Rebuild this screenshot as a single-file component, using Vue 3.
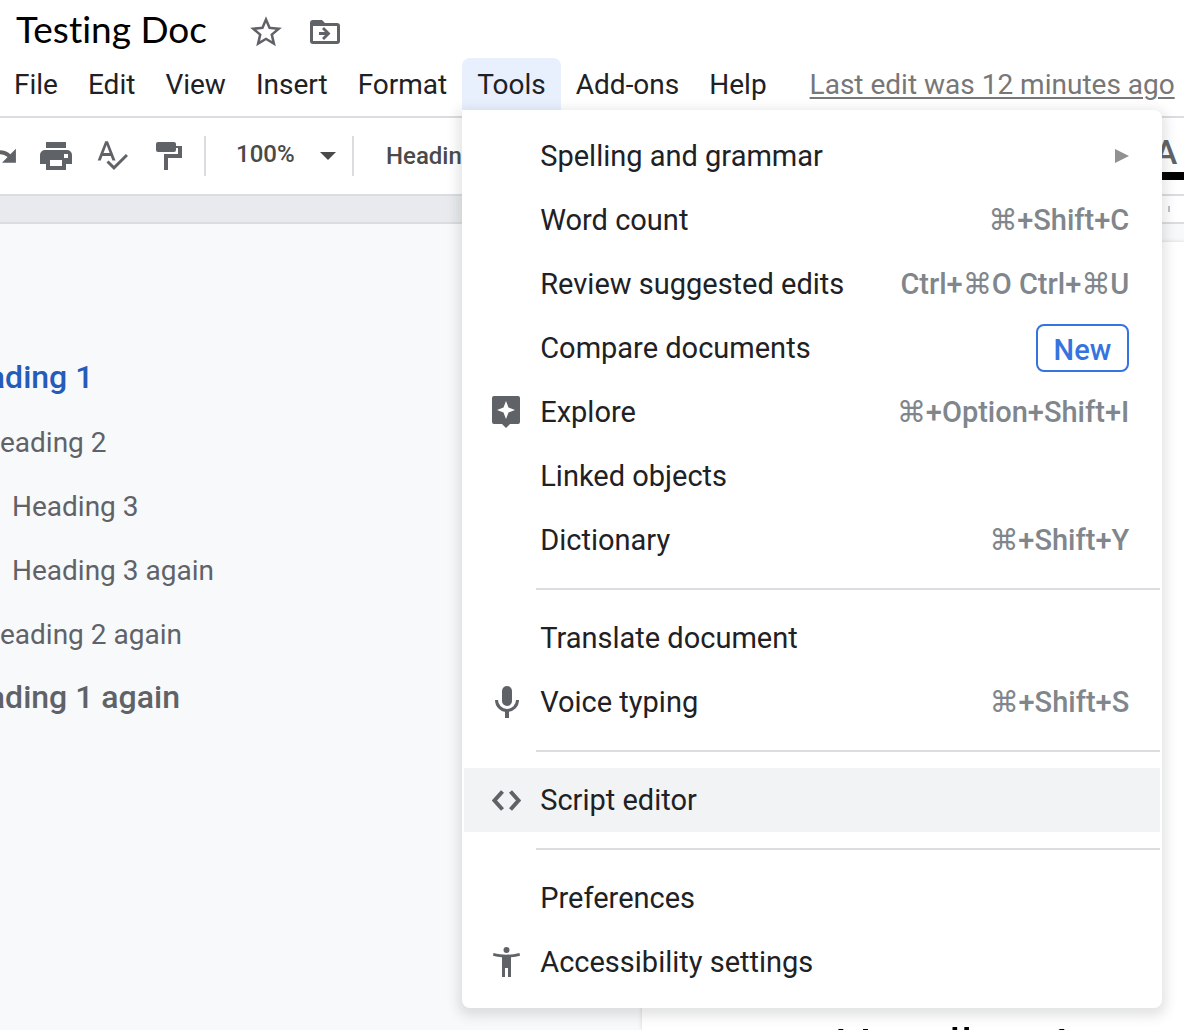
<script setup>
import { ref } from 'vue'

const title = ref('Testing Doc')
const zoom = ref('100%')
const paragraphStyle = ref('Heading 1')

const menusBefore = ['File', 'Edit', 'View', 'Insert', 'Format']
const menusAfter = ['Add-ons', 'Help']

const toolGroups = [
  [
    { label: 'Spelling and grammar', submenu: true },
    { label: 'Word count', keys: '⌘+Shift+C' },
    { label: 'Review suggested edits', keys: 'Ctrl+⌘O Ctrl+⌘U' },
    { label: 'Compare documents', badge: 'New' },
    { label: 'Explore', icon: 'explore', keys: '⌘+Option+Shift+I' },
    { label: 'Linked objects' },
    { label: 'Dictionary', keys: '⌘+Shift+Y' },
  ],
  [
    { label: 'Translate document' },
    { label: 'Voice typing', icon: 'mic', keys: '⌘+Shift+S' },
  ],
  [{ label: 'Script editor', icon: 'code', active: true }],
  [
    { label: 'Preferences' },
    { label: 'Accessibility settings', icon: 'accessibility' },
  ],
]

const outline = [
  { text: 'Heading 1', level: 1, current: true },
  { text: 'Heading 2', level: 2 },
  { text: 'Heading 3', level: 3 },
  { text: 'Heading 3 again', level: 3 },
  { text: 'Heading 2 again', level: 2 },
  { text: 'Heading 1 again', level: 1 },
]
</script>

<template>
  <div class="app">
    <header class="header">
      <div class="title-row">
        <input v-model="title" class="title" type="text" aria-label="Document title" />
        <button class="icon-button star" type="button" aria-label="Star">
          <svg width="38" height="38" viewBox="0 0 24 24">
            <path d="M22 9.24l-7.19-.62L12 2 9.19 8.63 2 9.24l5.46 4.73L5.82 21 12 17.27 18.18 21l-1.63-7.03L22 9.24zM12 15.4l-3.76 2.27 1-4.28-3.32-2.88 4.38-.38L12 6.1l1.71 4.04 4.38.38-3.32 2.88 1 4.28L12 15.4z" />
          </svg>
        </button>
        <button class="icon-button" type="button" aria-label="Move">
          <svg width="30" height="24" viewBox="0 0 30 24">
            <path fill-rule="evenodd" d="M3 0h9l3 3h12a3 3 0 0 1 3 3v15a3 3 0 0 1-3 3H3a3 3 0 0 1-3-3V3a3 3 0 0 1 3-3zM3 6v15h24V6z" />
            <path d="M9 12h6l-3-3 2-2 6.500 6.500L14 20l-2-2 3-3H9z" />
          </svg>
        </button>
      </div>
      <nav class="menubar" aria-label="Menu bar">
        <button v-for="name in menusBefore" :key="name" class="menu-title" type="button">{{ name }}</button>
        <div class="menu-host">
          <button class="menu-title open" type="button" aria-expanded="true">Tools</button>
          <div class="menu" role="menu">
            <div v-for="(group, index) in toolGroups" :key="index" class="group" role="group">
              <button
                v-for="item in group"
                :key="item.label"
                class="item"
                :class="{ active: item.active }"
                type="button"
                role="menuitem"
              >
                <span class="item-icon">
                  <svg v-if="item.icon === 'explore'" width="28" height="32" viewBox="0 0 28 32">
                    <path fill-rule="evenodd" d="M2 0h24a2 2 0 0 1 2 2v24a2 2 0 0 1-2 2h-8l-4 4-4-4H2a2 2 0 0 1-2-2V2a2 2 0 0 1 2-2zM14 5l-2.500 6.500L5 14l6.500 2.500L14 23l2.500-6.500L23 14l-6.500-2.500z" />
                  </svg>
                  <svg v-else-if="item.icon === 'mic'" width="26" height="32" viewBox="-2 0 26 32">
                    <rect x="7" y="0" width="10" height="20" rx="5" />
                    <path d="M1.500 14a10.500 10.500 0 0 0 21 0" fill="none" stroke="currentColor" stroke-width="3" />
                    <path d="M10 25h4v7h-4z" />
                  </svg>
                  <svg v-else-if="item.icon === 'code'" width="29" height="21" viewBox="0 0 29 21">
                    <path d="M10.500 1.500l-8 9 8 9M18.500 1.500l8 9-8 9" fill="none" stroke="currentColor" stroke-width="4" />
                  </svg>
                  <svg v-else-if="item.icon === 'accessibility'" width="27" height="30" viewBox="0 0 27 30">
                    <circle cx="13.500" cy="3" r="3" />
                    <path d="M.5 6C9 8.200 18 8.200 26.500 6l.5 2.700c-3 .8-6 1.300-9 1.600V30h-3v-9h-3v9H9V10.300c-3-.3-6-.8-9-1.600z" />
                  </svg>
                </span>
                <span class="item-label">{{ item.label }}</span>
                <svg v-if="item.submenu" class="submenu" width="14" height="14" viewBox="0 0 14 14">
                  <path d="M0 0l14 7-14 7z" />
                </svg>
                <span v-if="item.badge" class="badge">{{ item.badge }}</span>
                <kbd v-if="item.keys" class="keys">{{ item.keys }}</kbd>
              </button>
            </div>
          </div>
        </div>
        <button v-for="name in menusAfter" :key="name" class="menu-title" type="button">{{ name }}</button>
        <a class="last-edit" href="#history">Last edit was 12 minutes ago</a>
      </nav>
    </header>

    <div class="toolbar" role="toolbar">
      <button class="tool" type="button" aria-label="Redo">
        <svg width="37" height="37" viewBox="0 0 24 24">
          <path d="M18.400 10.600C16.550 8.990 14.150 8 11.500 8c-4.650 0-8.580 3.030-9.960 7.220L3.900 16c1.050-3.190 4.050-5.500 7.600-5.500 1.950 0 3.730.72 5.120 1.880L13 16h9V7l-3.600 3.600z" />
        </svg>
      </button>
      <button class="tool" type="button" aria-label="Print">
        <svg width="32" height="28" viewBox="0 0 32 28">
          <path fill-rule="evenodd" d="M6 0h20v6H6zM5 8h22a5 5 0 0 1 5 5v9h-6v6H6v-6H0v-9a5 5 0 0 1 5-5zM24 12v4h4v-4zM10 18v6h12v-6z" />
        </svg>
      </button>
      <button class="tool" type="button" aria-label="Spelling and grammar check">
        <svg width="31" height="30" viewBox="2 3 21 20">
          <path d="M12.450 16h2.090L9.430 3H7.570L2.460 16h2.090l1.120-3h5.640l1.140 3zm-6.020-5L8.500 5.480 10.570 11H6.430zm15.160.59l-8.090 8.090L9.830 16l-1.410 1.410 5.090 5.090L23 13l-1.410-1.410z" />
        </svg>
      </button>
      <button class="tool" type="button" aria-label="Paint format">
        <svg width="28" height="28" viewBox="-2 0 28 28">
          <rect width="20" height="10" rx="2" />
          <path d="M20 4h6v12H12v12H8V12h14V6h-2z" />
        </svg>
      </button>
      <div class="divider first"></div>
      <div class="dropdown zoom">
        <select v-model="zoom" aria-label="Zoom">
          <option>50%</option>
          <option>100%</option>
          <option>150%</option>
        </select>
        <svg width="16" height="8" viewBox="0 0 16 8"><path d="M0 0h16L8 8z" /></svg>
      </div>
      <div class="divider"></div>
      <div class="dropdown style">
        <select v-model="paragraphStyle" aria-label="Styles">
          <option>Heading 1</option>
          <option>Heading 2</option>
          <option>Heading 3</option>
        </select>
      </div>
      <button class="text-color" type="button" aria-label="Text color">A</button>
    </div>

    <div class="ruler">
      <div class="ruler-page"><span class="tick"></span></div>
    </div>

    <main class="workspace">
      <nav class="outline" aria-label="Document outline">
        <a
          v-for="entry in outline"
          :key="entry.text"
          href="#heading"
          :class="['entry', 'level-' + entry.level, { current: entry.current }]"
        >{{ entry.text }}</a>
      </nav>
      <article class="page">
        <h1>Heading 1</h1>
      </article>
    </main>
  </div>
</template>

<style>
body {
  margin: 0;
  overflow: hidden;
}
</style>

<style scoped>
.app {
  display: flex;
  flex-direction: column;
  height: 100vh;
  overflow: hidden;
  background: #fff;
  color: #202124;
  font-family: Roboto, "Liberation Sans", "DejaVu Sans", sans-serif;
  font-size: 28px;
}

button,
input,
select {
  margin: 0;
  padding: 0;
  border: 0;
  background: none;
  color: inherit;
  font: inherit;
}

svg {
  display: block;
  fill: currentColor;
}

.header {
  flex: none;
  border-bottom: 2px solid #dadce0;
  padding-bottom: 6px;
}

.title-row {
  display: flex;
  align-items: center;
  height: 58px;
  padding: 6px 16px 0;
  box-sizing: border-box;
  color: #5f6368;
}

.title {
  width: 231px;
  height: 48px;
  padding-bottom: 8px;
  box-sizing: border-box;
  color: #000;
  font-family: Lato, Roboto, sans-serif;
  font-size: 37px;
  font-variant-ligatures: none;
}

.star {
  margin-right: 25px;
}

.menubar {
  display: flex;
  height: 52px;
  margin-left: -1px;
  white-space: nowrap;
}

.menu-title {
  height: 52px;
  padding: 0 15px;
}

.menu-title.open {
  border-radius: 8px 8px 0 0;
  background: #e8f0fe;
}

.menu-host {
  position: relative;
}

.last-edit {
  margin-left: 28px;
  color: #777;
  line-height: 54px;
  text-decoration: underline;
  text-decoration-thickness: 2px;
  text-underline-offset: 3px;
}

.menu {
  position: absolute;
  z-index: 10;
  top: 52px;
  left: 0;
  width: 700px;
  box-sizing: border-box;
  padding: 14px 2px;
  border-radius: 0 8px 8px 8px;
  background: #fff;
  box-shadow: 0 4px 12px 4px rgba(60, 64, 67, 0.15);
  font-size: 29px;
}

.group + .group::before {
  content: "";
  display: block;
  height: 2px;
  margin: 16px 0 16px 72px;
  background: #dadce0;
}

.item {
  display: flex;
  align-items: center;
  width: 100%;
  height: 64px;
  padding: 0 31px 0 24px;
  text-align: left;
}

.item.active {
  background: #f1f3f4;
}

.item-icon {
  display: flex;
  justify-content: center;
  width: 36px;
  margin-right: 16px;
  color: #5f6368;
}

.item-label {
  flex: 1;
}

.submenu {
  color: #919191;
}

.keys {
  color: #80868b;
  font-family: inherit;
  font-weight: 500;
}

.badge {
  box-sizing: border-box;
  height: 48px;
  padding: 0 16px;
  border: 2px solid #3574e0;
  border-radius: 8px;
  color: #3574e0;
  font-weight: 500;
  line-height: 48px;
}

.toolbar {
  display: flex;
  flex: none;
  align-items: center;
  height: 76px;
  margin-left: -28px;
  color: #5f6368;
}

.tool {
  display: flex;
  flex: none;
  align-items: center;
  justify-content: center;
  width: 56px;
  height: 52px;
}

.divider {
  width: 2px;
  height: 40px;
  background: #dadce0;
}

.divider.first {
  margin-left: 8px;
}

.dropdown {
  display: flex;
  align-items: center;
  justify-content: space-between;
  box-sizing: border-box;
  color: #4a4a4a;
  font-size: 24px;
  font-weight: 500;
}

.dropdown select {
  appearance: none;
}

.zoom {
  width: 146px;
  padding: 0 16px 0 30px;
}

.zoom select {
  padding-bottom: 4px;
}

.style {
  width: 200px;
  padding-left: 32px;
}

.text-color {
  width: 48px;
  height: 48px;
  margin-right: -8px;
  margin-left: auto;
  padding-right: 4px;
  border-bottom: 8px solid #000;
  font-size: 34px;
  font-weight: 500;
  line-height: 40px;
}

.ruler {
  flex: none;
  height: 26px;
  border: solid #dadce0;
  border-width: 2px 0;
  background: #e8eaed;
}

.ruler-page {
  display: flex;
  align-items: center;
  justify-content: flex-end;
  height: 100%;
  margin-left: 642px;
  padding-right: 14px;
  background: #fff;
}

.tick {
  width: 2px;
  height: 6px;
  background: #bdc1c6;
}

.workspace {
  display: flex;
  flex: 1;
  min-height: 0;
  background: #f8f9fb;
}

.outline {
  flex: none;
  display: flex;
  flex-direction: column;
  width: 694px;
  margin-left: -52px;
  padding-top: 121px;
}

.entry {
  height: 64px;
  color: #5f6368;
  line-height: 68px;
  text-decoration: none;
}

.level-1 {
  font-size: 32px;
  font-weight: 500;
  line-height: 64px;
}

.level-2 {
  padding-left: 32px;
}

.level-3 {
  padding-left: 64px;
}

.current {
  color: #255bb9;
}

.page {
  flex: 1;
  margin-top: 18px;
  padding: 776px 0 0 192px;
  background: #fff;
  box-shadow: 0 0 4px rgba(60, 64, 67, 0.2);
}

.page h1 {
  margin: 0;
  color: #000;
  font-family: "Liberation Sans", Arial, sans-serif;
  font-size: 53px;
  font-weight: 400;
  line-height: 60px;
}
</style>
